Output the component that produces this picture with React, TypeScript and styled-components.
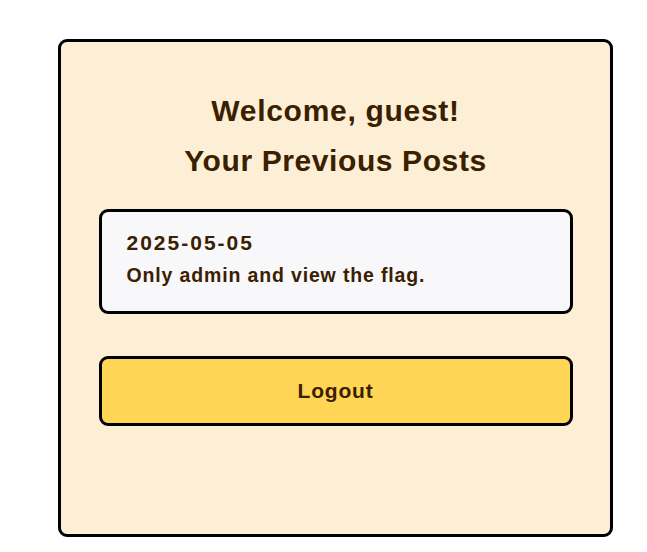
import React from 'react';
import styled, { createGlobalStyle } from 'styled-components';

const GlobalStyle = createGlobalStyle`
    body {
        margin: 0;
        background-color: #ffffff;
        font-family: "Liberation Sans", Arial, sans-serif;
    }
`;

const Page = styled.div`
    padding: 39px 34px 15px 58px;
`;

const Card = styled.div`
    width: 549px;
    height: 492px;
    box-sizing: content-box;
    background-color: #fcefd5;
    border: 3px solid #000;
    border-radius: 9px;
    display: flex;
    flex-direction: column;
    align-items: center;
`;

const Title = styled.h1`
    margin: 49px 0 0;
    font-size: 30px;
    font-weight: bold;
    letter-spacing: 0.7px;
    line-height: 40px;
    color: #3b2000;
`;

const Subtitle = styled.h2`
    margin: 10px 0 0;
    font-size: 30px;
    font-weight: bold;
    letter-spacing: 0.6px;
    line-height: 40px;
    color: #3b2000;
`;

const PostList = styled.div`
    margin-top: 28px;
    display: flex;
    flex-direction: column;
    gap: 12px;
`;

const Post = styled.div`
    width: 474px;
    height: 105px;
    box-sizing: border-box;
    background-color: #f8f8fb;
    border: 3px solid #000;
    border-radius: 9px;
    padding: 19px 25px;
    color: #3b2000;
`;

const PostDate = styled.div`
    font-size: 21px;
    font-weight: bold;
    letter-spacing: 2px;
    line-height: 24px;
`;

const PostBody = styled.div`
    margin-top: 8px;
    font-size: 19.5px;
    font-weight: bold;
    letter-spacing: 0.85px;
    line-height: 24px;
`;

const Button = styled.button`
    margin-top: 42px;
    width: 474px;
    height: 70px;
    background-color: #ffd555;
    border: 3px solid #000;
    border-radius: 9px;
    font-family: "Liberation Sans", Arial, sans-serif;
    font-size: 21px;
    font-weight: bold;
    letter-spacing: 0.8px;
    color: #3b2000;
    cursor: pointer;
`;

const posts = [{ date: '2025-05-05', text: 'Only admin and view the flag.' }];

function App() {
    return (
        <Page>
            <GlobalStyle />
            <Card>
                <Title>Welcome, guest!</Title>
                <Subtitle>Your Previous Posts</Subtitle>
                <PostList>
                    {posts.map((p) => (
                        <Post key={p.date}>
                            <PostDate>{p.date}</PostDate>
                            <PostBody>{p.text}</PostBody>
                        </Post>
                    ))}
                </PostList>
                <Button type="button">Logout</Button>
            </Card>
        </Page>
    );
}

export default App;
